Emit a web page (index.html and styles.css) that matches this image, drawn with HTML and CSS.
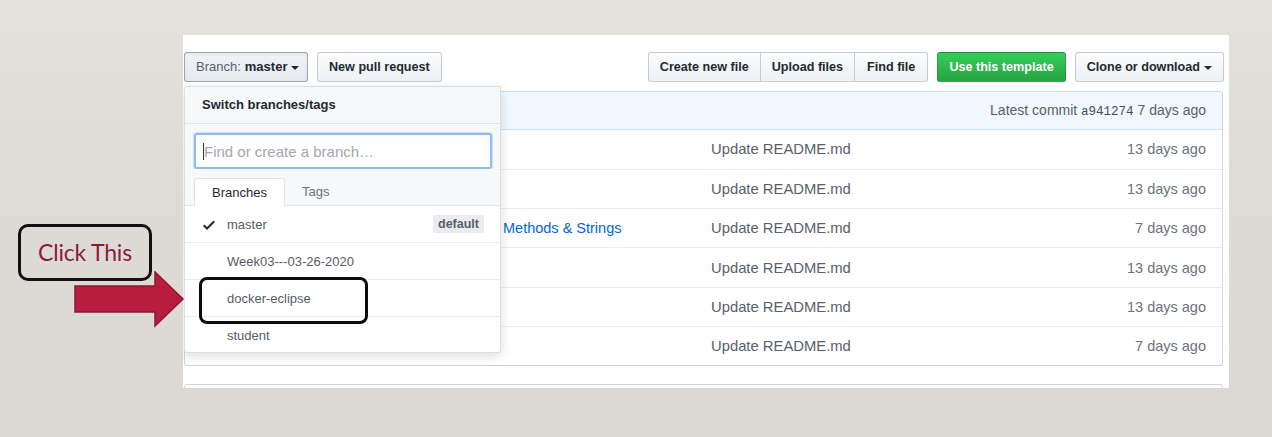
FILE: index.html
```html
<!DOCTYPE html>
<html lang="en">
<head>
<meta charset="utf-8">
<title>Branch switch</title>
<link rel="stylesheet" href="styles.css">
</head>
<body>
<div class="stage">
  <div class="callout">Click This</div>
  <svg class="arrow" width="112" height="58" viewBox="0 0 112 58">
    <path d="M1 15 H81 V1 L109 28 L81 55 V41 H1 Z" fill="#b81d40" stroke="#8f1732" stroke-width="1.5"/>
  </svg>

  <section class="shot">
    <div class="toolbar">
      <div class="tool-left">
        <button class="btn btn-branch"><span class="muted">Branch:</span> <b>master</b><span class="caret"></span></button>
        <button class="btn">New pull request</button>
      </div>
      <div class="tool-right">
        <div class="btn-group">
          <button class="btn">Create new file</button>
          <button class="btn">Upload files</button>
          <button class="btn btn-find">Find file</button>
        </div>
        <button class="btn btn-primary">Use this template</button>
        <button class="btn">Clone or download<span class="caret"></span></button>
      </div>
    </div>

    <div class="files">
      <div class="commit-tease">Latest commit <code>a941274</code> 7 days ago</div>
      <div class="file-row">
        <div class="name"><svg class="ficon" width="12" height="16" viewBox="0 0 12 16"><path d="M6 5H2V4h4v1zM2 8h7V7H2v1zm0 2h7V9H2v1zm0 2h7v-1H2v1zm10-7.5V14c0 .55-.45 1-1 1H1c-.55 0-1-.45-1-1V2c0-.55.45-1 1-1h7.5L12 4.5zM11 5L8 2H1v12h10V5z"/></svg></div>
        <div class="msg">Update README.md</div>
        <div class="age">13 days ago</div>
      </div>
      <div class="file-row">
        <div class="name"><svg class="ficon" width="12" height="16" viewBox="0 0 12 16"><path d="M6 5H2V4h4v1zM2 8h7V7H2v1zm0 2h7V9H2v1zm0 2h7v-1H2v1zm10-7.5V14c0 .55-.45 1-1 1H1c-.55 0-1-.45-1-1V2c0-.55.45-1 1-1h7.5L12 4.5zM11 5L8 2H1v12h10V5z"/></svg></div>
        <div class="msg">Update README.md</div>
        <div class="age">13 days ago</div>
      </div>
      <div class="file-row">
        <div class="name"><svg class="ficon" width="12" height="16" viewBox="0 0 12 16"><path d="M6 5H2V4h4v1zM2 8h7V7H2v1zm0 2h7V9H2v1zm0 2h7v-1H2v1zm10-7.5V14c0 .55-.45 1-1 1H1c-.55 0-1-.45-1-1V2c0-.55.45-1 1-1h7.5L12 4.5zM11 5L8 2H1v12h10V5z"/></svg><a class="link link-tail">Methods &amp; Strings</a></div>
        <div class="msg">Update README.md</div>
        <div class="age">7 days ago</div>
      </div>
      <div class="file-row">
        <div class="name"><svg class="ficon" width="12" height="16" viewBox="0 0 12 16"><path d="M6 5H2V4h4v1zM2 8h7V7H2v1zm0 2h7V9H2v1zm0 2h7v-1H2v1zm10-7.5V14c0 .55-.45 1-1 1H1c-.55 0-1-.45-1-1V2c0-.55.45-1 1-1h7.5L12 4.5zM11 5L8 2H1v12h10V5z"/></svg></div>
        <div class="msg">Update README.md</div>
        <div class="age">13 days ago</div>
      </div>
      <div class="file-row">
        <div class="name"><svg class="ficon" width="12" height="16" viewBox="0 0 12 16"><path d="M6 5H2V4h4v1zM2 8h7V7H2v1zm0 2h7V9H2v1zm0 2h7v-1H2v1zm10-7.5V14c0 .55-.45 1-1 1H1c-.55 0-1-.45-1-1V2c0-.55.45-1 1-1h7.5L12 4.5zM11 5L8 2H1v12h10V5z"/></svg></div>
        <div class="msg">Update README.md</div>
        <div class="age">13 days ago</div>
      </div>
      <div class="file-row">
        <div class="name"><svg class="ficon" width="12" height="16" viewBox="0 0 12 16"><path d="M6 5H2V4h4v1zM2 8h7V7H2v1zm0 2h7V9H2v1zm0 2h7v-1H2v1zm10-7.5V14c0 .55-.45 1-1 1H1c-.55 0-1-.45-1-1V2c0-.55.45-1 1-1h7.5L12 4.5zM11 5L8 2H1v12h10V5z"/></svg></div>
        <div class="msg">Update README.md</div>
        <div class="age">7 days ago</div>
      </div>
    </div>
    <div class="readme-box"></div>

    <div class="dropdown">
      <div class="dd-header">Switch branches/tags</div>
      <div class="dd-filter">
        <div class="dd-input"><span class="cursor"></span><span class="placeholder">Find or create a branch…</span></div>
      </div>
      <div class="dd-tabs">
        <span class="tab tab-active">Branches</span>
        <span class="tab">Tags</span>
      </div>
      <ul class="dd-list">
        <li class="dd-item">
          <svg class="check" width="12" height="16" viewBox="0 0 12 16"><path d="M12 5l-8 8-4-4 1.5-1.5L4 10l6.5-6.5L12 5z"/></svg>
          <span class="branch">master</span>
          <span class="label">default</span>
        </li>
        <li class="dd-item"><span class="branch">Week03---03-26-2020</span></li>
        <li class="dd-item"><span class="branch">docker-eclipse</span></li>
        <li class="dd-item"><span class="branch">student</span></li>
      </ul>
    </div>
    <div class="highlight"></div>
  </section>
</div>
</body>
</html>
```
FILE: styles.css
```css
* { box-sizing: border-box; }

html, body {
  margin: 0;
  padding: 0;
}

body {
  width: 1272px;
  height: 437px;
  overflow: hidden;
  background: linear-gradient(180deg, #e4e2dd 0%, #dedbd6 45%, #dcd9d3 100%);
  font-family: "Liberation Sans", Arial, sans-serif;
  color: #24292e;
}

.stage {
  position: relative;
  height: 437px;
  padding: 35px 0 0 183px;
}

/* annotations */
.callout {
  position: absolute;
  left: 18px;
  top: 224px;
  width: 134px;
  height: 57px;
  border: 3px solid #111;
  border-radius: 10px;
  font-family: Lato, "Open Sans", sans-serif;
  font-size: 23px;
  color: #8c1b3b;
  display: flex;
  align-items: center;
  justify-content: center;
  padding-bottom: 2px;
  letter-spacing: -0.2px;
}

.arrow {
  position: absolute;
  left: 74px;
  top: 271px;
  z-index: 5;
}

.highlight {
  position: absolute;
  left: 16px;
  top: 242px;
  width: 169px;
  height: 47px;
  border: 3px solid #0c0c0c;
  border-radius: 8px;
  z-index: 4;
}

/* screenshot panel */
.shot {
  position: relative;
  width: 1046px;
  height: 353px;
  background: #fff;
  overflow: hidden;
  padding: 17px 5px 0 1px;
}

.toolbar {
  display: flex;
  justify-content: space-between;
  height: 30px;
}

.tool-left, .tool-right {
  display: flex;
  gap: 9px;
}

.btn {
  height: 30px;
  padding: 0 11px;
  font-family: "Liberation Sans", Arial, sans-serif;
  font-weight: bold;
  font-size: 12.6px;
  line-height: 28px;
  color: #24292e;
  background: linear-gradient(180deg, #fafbfc 0%, #eff3f6 90%);
  border: 1px solid rgba(27, 31, 35, 0.2);
  border-radius: 3px;
  display: inline-flex;
  align-items: center;
  white-space: nowrap;
}

.btn-find { padding: 0 12px; }

.btn-branch {
  width: 124px;
  font-weight: normal;
  font-size: 13px;
  background: linear-gradient(180deg, #f0f3f6 0%, #e6ebf1 90%);
  border-color: rgba(27, 31, 35, 0.35);
  box-shadow: inset 0 1px 3px rgba(27,31,35,.08);
}

.btn-branch .muted { color: #586069; margin-right: 4px; }
.btn-branch b { font-weight: bold; }

.caret {
  display: inline-block;
  width: 0;
  height: 0;
  margin-left: 4px;
  margin-top: 1px;
  border-top: 4px solid #24292e;
  border-left: 4px solid transparent;
  border-right: 4px solid transparent;
}

.btn-group { display: flex; }
.btn-group .btn { border-radius: 0; margin-left: -1px; }
.btn-group .btn:first-child { border-radius: 3px 0 0 3px; margin-left: 0; }
.btn-group .btn:last-child { border-radius: 0 3px 3px 0; }

.btn-primary {
  color: #fff;
  background: linear-gradient(180deg, #34d058 0%, #28a745 90%);
  border-color: rgba(27, 31, 35, 0.2);
}

/* file table */
.files {
  margin-top: 9px;
  width: 1039px;
  border: 1px solid #d1d5da;
  border-top-color: #c8e1ff;
  border-radius: 3px;
}

.commit-tease {
  height: 38px;
  background: #f1f8ff;
  border-bottom: 1px solid #c8e1ff;
  color: #586069;
  font-size: 14px;
  text-align: right;
  padding: 0 16px;
  line-height: 37px;
}

.commit-tease code {
  font-family: "Liberation Mono", "DejaVu Sans Mono", monospace;
  font-size: 12.5px;
  color: #444d56;
}

.file-row {
  display: grid;
  grid-template-columns: 526px 1fr auto;
  align-items: center;
  height: 39.3px;
  border-top: 1px solid #eaecef;
  font-size: 14.5px;
  padding-right: 16px;
}

.commit-tease + .file-row { border-top: 0; height: 38.8px; }

.name {
  display: flex;
  align-items: center;
  padding-left: 16px;
  height: 100%;
}

.ficon { fill: #8a96a3; flex: none; }

.link { color: #0366d6; text-decoration: none; }
.link-tail { margin-left: 290px; }

.msg { color: #586069; font-size: 14.8px; }
.age { color: #6a737d; text-align: right; }

.readme-box {
  margin-top: 18px;
  width: 1039px;
  height: 40px;
  border: 1px solid #d1d5da;
  border-radius: 3px;
}

/* dropdown */
.dropdown {
  position: absolute;
  left: 1px;
  top: 51px;
  width: 317px;
  height: 267px;
  background: #fff;
  border: 1px solid rgba(27, 31, 35, 0.15);
  border-radius: 3px;
  box-shadow: 0 3px 12px rgba(27, 31, 35, 0.15);
  z-index: 3;
  overflow: hidden;
}

.dd-header {
  height: 37px;
  padding-left: 17px;
  font-size: 13px;
  font-weight: bold;
  line-height: 35px;
  background: #f6f8fa;
  border-bottom: 1px solid #e1e4e8;
}

.dd-filter {
  padding: 9px 8px 0 9px;
  background: #f6f8fa;
}

.dd-input {
  height: 36px;
  background: #fff;
  border: 2px solid #8ebcf2;
  border-radius: 3px;
  box-shadow: 0 0 0 1px rgba(3, 102, 214, 0.15);
  display: flex;
  align-items: center;
  padding-left: 7px;
  font-size: 15px;
}

.cursor {
  width: 1px;
  height: 17px;
  background: #333;
  margin-right: 0;
}

.placeholder { color: #a3a8ae; }

.dd-tabs {
  display: flex;
  align-items: flex-end;
  padding: 0 9px;
  height: 37px;
  background: #f6f8fa;
  border-bottom: 1px solid #e1e4e8;
  font-size: 13px;
}

.tab {
  height: 27px;
  line-height: 27px;
  padding: 0 17px;
  color: #6a737d;
}

.tab-active {
  background: #fff;
  color: #24292e;
  border: 1px solid #e1e4e8;
  border-bottom: 0;
  border-radius: 3px 3px 0 0;
  margin-bottom: -1px;
  height: 28px;
}

.dd-list {
  list-style: none;
  margin: 0;
  padding: 0;
}

.dd-item {
  height: 37px;
  border-bottom: 1px solid #eaecef;
  display: flex;
  align-items: center;
  padding: 0 16px 0 42px;
  position: relative;
  font-size: 13px;
  color: #586069;
}

.dd-item:last-child { border-bottom: 0; }

.check {
  position: absolute;
  left: 18px;
  top: 11px;
  fill: #24292e;
}

.branch { color: #555d66; }

.label {
  margin-left: auto;
  background: #eaecef;
  color: #586069;
  font-weight: bold;
  font-size: 12.5px;
  padding: 0 5px;
  height: 18px;
  line-height: 18px;
  border-radius: 2px;
}
```
